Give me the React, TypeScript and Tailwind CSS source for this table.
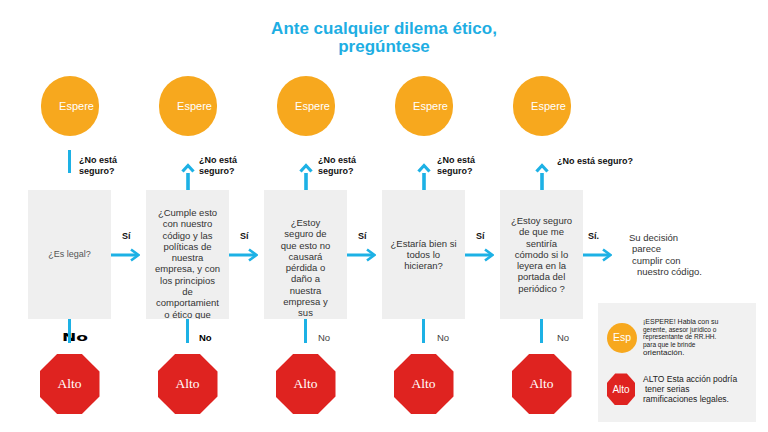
import React from "react";

const OCT =
  "[clip-path:polygon(29.3%_0,70.7%_0,100%_29.3%,100%_70.7%,70.7%_100%,29.3%_100%,0_70.7%,0_29.3%)]";

function UpArrow() {
  return (
    <svg width="14" height="28" viewBox="0 0 14 28" className="block">
      <polyline points="1.5,9.5 7,3.5 12.5,9.5" fill="none" stroke="#1db1e5" strokeWidth="3.2" />
      <rect x="5.2" y="11" width="3.6" height="17" fill="#1db1e5" />
    </svg>
  );
}

function RightArrow() {
  return (
    <svg width="29" height="16" viewBox="0 0 29 16" className="block">
      <line x1="0" y1="8" x2="27" y2="8" stroke="#1db1e5" strokeWidth="3" />
      <polyline points="20,2.5 27.5,8 20,13.5" fill="none" stroke="#1db1e5" strokeWidth="2.6" />
    </svg>
  );
}

type Col = {
  top: "line" | "arrow";
  topLabel: React.ReactNode;
  topLabelCls: string;
  boxCls: string;
  lines: string[];
  no: React.ReactNode;
};

const cols: Col[] = [
  {
    top: "line",
    topLabel: (
      <>
        ¿No está
        <br />
        seguro?
      </>
    ),
    topLabelCls: "left-[51px] top-[19px]",
    boxCls: "items-center justify-center text-[9px] text-[#555]",
    lines: ["¿Es legal?"],
    no: (
      <span className="absolute left-[34px] top-[13px] inline-block origin-left scale-x-[1.55] font-['DejaVu_Sans',sans-serif] text-[11px] font-black leading-[12px] text-black">
        No
      </span>
    ),
  },
  {
    top: "arrow",
    topLabel: (
      <>
        ¿No está
        <br />
        seguro?
      </>
    ),
    topLabelCls: "left-[53px] top-[19px]",
    boxCls: "pt-[17px] text-[9.5px] text-[#333]",
    lines: [
      "¿Cumple esto",
      "con nuestro",
      "código y las",
      "políticas de",
      "nuestra",
      "empresa, y con",
      "los principios",
      "de",
      "comportamient",
      "o ético que",
      "promovemos?",
    ],
    no: (
      <span className="absolute left-[53px] top-[14px] text-[9.5px] font-bold leading-[10px] text-black">No</span>
    ),
  },
  {
    top: "arrow",
    topLabel: (
      <>
        ¿No está
        <br />
        seguro?
      </>
    ),
    topLabelCls: "left-[54px] top-[19px]",
    boxCls: "pt-[27px] text-[9.5px] text-[#333]",
    lines: [
      "¿Estoy",
      "seguro de",
      "que esto no",
      "causará",
      "pérdida o",
      "daño a",
      "nuestra",
      "empresa y",
      "sus",
      "accionistas?",
    ],
    no: <span className="absolute left-[54px] top-[14px] text-[9.5px] leading-[10px] text-[#444]">No</span>,
  },
  {
    top: "arrow",
    topLabel: (
      <>
        ¿No está
        <br />
        seguro?
      </>
    ),
    topLabelCls: "left-[55px] top-[19px]",
    boxCls: "items-center justify-center text-[9.5px] text-[#333]",
    lines: ["¿Estaría bien si", "todos lo", "hicieran?"],
    no: <span className="absolute left-[55px] top-[14px] text-[9.5px] leading-[10px] text-[#444]">No</span>,
  },
  {
    top: "arrow",
    topLabel: <>¿No está seguro?</>,
    topLabelCls: "left-[57px] top-[20px]",
    boxCls: "items-center justify-center text-[9.5px] text-[#333]",
    lines: [
      "¿Estoy seguro",
      "de que me",
      "sentiría",
      "cómodo si lo",
      "leyera en la",
      "portada del",
      "periódico ?",
    ],
    no: <span className="absolute left-[57px] top-[14px] text-[9.5px] leading-[10px] text-[#444]">No</span>,
  },
];

function Column({ c }: { c: Col }) {
  return (
    <div className="flex w-[83px] shrink-0 flex-col items-center">
      <div className="flex h-[60px] w-[58px] items-center justify-center rounded-full bg-[#f7a81e] pl-[14px] text-[11px] text-white">
        Espere
      </div>
      <div className="relative flex h-[54px] w-full justify-center">
        {c.top === "line" ? (
          <div className="mt-[14px] h-[23px] w-[3px] bg-[#1db1e5]" />
        ) : (
          <div className="mt-[26px]">
            <UpArrow />
          </div>
        )}
        <div className={"absolute whitespace-nowrap text-[9px] font-bold leading-[11px] text-[#111] " + c.topLabelCls}>
          {c.topLabel}
        </div>
      </div>
      <div className={"flex h-[129px] w-[83px] flex-col overflow-hidden bg-[#efefef] text-center leading-[11.3px] " + c.boxCls}>
        {c.lines.map((l, i) => (
          <div key={i} className="whitespace-nowrap">
            {l}
          </div>
        ))}
      </div>
      <div className="relative h-[35px] w-full">
        {c.no}
        <div className="relative mx-auto h-[24px] w-[3.5px] bg-[#1db1e5]" />
      </div>
      <div className={"flex h-[60px] w-[60px] items-center justify-center bg-[#df2320] font-['Liberation_Serif','Times_New_Roman',serif] text-[13.5px] text-white " + OCT}>
        Alto
      </div>
    </div>
  );
}

function Connector() {
  return (
    <div className="flex w-[35px] shrink-0 flex-col pt-[114px]">
      <div className="mt-[41px] pl-[11px] text-[9px] font-bold leading-[10px] text-[#111]">Sí</div>
      <div className="mt-[6px]">
        <RightArrow />
      </div>
    </div>
  );
}

export default function App() {
  return (
    <div className="relative h-[432px] w-[768px] overflow-hidden bg-white font-['Liberation_Sans',Arial,sans-serif]">
      <h1 className="pt-[20px] text-center text-[17px] font-bold leading-[18px] text-[#1eaee3]">
        Ante cualquier dilema ético,
        <br />
        pregúntese
      </h1>
      <div className="mt-[20px] flex pl-[28px]">
        {cols.map((c, i) => (
          <React.Fragment key={i}>
            {i > 0 && <Connector />}
            <Column c={c} />
          </React.Fragment>
        ))}
        <div className="flex flex-col pt-[114px]">
          <div className="flex h-[113px]">
            <div className="flex w-[46px] flex-col">
              <div className="mt-[41px] pl-[5px] text-[9px] font-bold leading-[10px] text-[#111]">Sí.</div>
              <div className="mt-[6px]">
                <RightArrow />
              </div>
            </div>
            <div className="mt-[42px] text-[9.5px] leading-[11.3px] text-[#333]">
              <div>Su decisión</div>
              <div className="pl-[3px]">parece</div>
              <div className="pl-[3px]">cumplir con</div>
              <div className="pl-[8px]">nuestro código.</div>
            </div>
          </div>
          <div className="ml-[15px] flex h-[119px] w-[158px] flex-col bg-[#f1f1f1] pl-[9px]">
            <div className="mt-[15px] flex items-center gap-[6px]">
              <div className="flex h-[30px] w-[30px] shrink-0 items-center justify-center rounded-full bg-[#f7a81e] text-[10.5px] text-white">
                Esp
              </div>
              <div className="text-[6.5px] leading-[7.6px] text-[#222]">
                <div className="text-[7px]">¡ESPERE! Habla con su</div>
                <div>gerente, asesor jurídico o</div>
                <div>representante de RR.HH.</div>
                <div>para que le brinde</div>
                <div className="text-[8px] leading-[10px]">orientación.</div>
              </div>
            </div>
            <div className="mt-[15px] flex items-center gap-[8px]">
              <div className={"flex h-[32px] w-[28px] shrink-0 items-center justify-center bg-[#df2320] text-[10px] text-white " + OCT}>
                Alto
              </div>
              <div className="text-[8.5px] leading-[10px] text-[#222]">
                <div>ALTO Esta acción podría</div>
                <div className="pl-[2px]">tener serias</div>
                <div>ramificaciones legales.</div>
              </div>
            </div>
          </div>
        </div>
      </div>
    </div>
  );
}
